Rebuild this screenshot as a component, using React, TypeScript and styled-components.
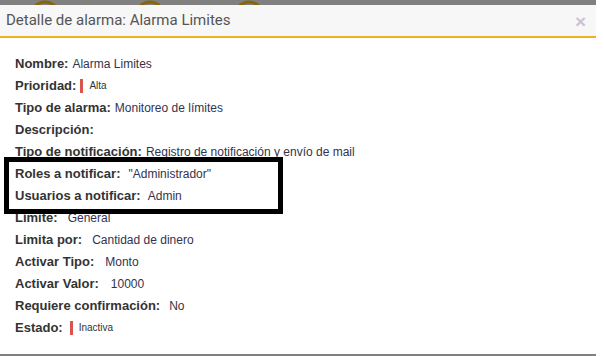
import React from "react";
import styled, { createGlobalStyle } from "styled-components";

// Alarm detail modal, shown over a dimmed page

const Global = createGlobalStyle`
  html, body { margin: 0; padding: 0; background: #fff; }
  body { font-family: "Liberation Sans", Arial, sans-serif; }
`;

const Page = styled.div`
  position: relative;
  width: 604px;
  height: 356px;
  overflow: hidden;
  display: flex;
  flex-direction: column;
`;

const Backdrop = styled.div<{ h: number }>`
  width: 596px;
  height: ${({ h }) => h}px;
  background: #808080;
  flex-shrink: 0;
  overflow: hidden;
  svg { display: block; }
`;

const Modal = styled.div`
  width: 596px;
  flex: 1;
  background: #fff;
  display: flex;
  flex-direction: column;
`;

const Header = styled.div`
  height: 33px;
  background: #f7f7f7;
  border-bottom: 2px solid #f2b01e;
  display: flex;
  align-items: center;
  justify-content: space-between;
  padding: 0 10px 0 6px;
  box-sizing: border-box;
`;

const Title = styled.div`
  font-family: Roboto, "Liberation Sans", sans-serif;
  font-size: 15px;
  color: #555;
  margin-top: -2px;
`;

const Close = styled.span`
  font-family: "Liberation Sans", Arial, sans-serif;
  font-size: 19px;
  font-weight: bold;
  color: #cbc3d3;
  line-height: 1;
  margin-top: 2px;
`;

const Body = styled.div`
  padding: 15px 15px 0;
  display: flex;
  flex-direction: column;
`;

const Row = styled.div`
  height: 22px;
  line-height: 22px;
  display: flex;
  align-items: baseline;
  color: #333;
`;

const Label = styled.span`
  font-weight: bold;
  font-size: 13px;
  color: #333;
`;

const Value = styled.span<{ gap: number }>`
  font-size: 12px;
  color: #33334d;
  margin-left: ${({ gap }) => gap}px;
`;

const Tag = styled.span<{ gap: number }>`
  display: inline-flex;
  align-items: center;
  align-self: center;
  margin-left: ${({ gap }) => gap}px;
  font-size: 10px;
  line-height: 14px;
  color: #333;
  &::before {
    content: "";
    width: 3px;
    height: 14px;
    background: #d9534f;
    margin-right: 6px;
  }
`;

const Highlight = styled.div`
  position: absolute;
  left: 4px;
  top: 157px;
  width: 279px;
  height: 57px;
  border: 5px solid #000;
  box-sizing: border-box;
`;

const rows: { label: string; value?: string; gap?: number; tag?: boolean }[] = [
  { label: "Nombre:", value: "Alarma Limites", gap: 4 },
  { label: "Prioridad:", value: "Alta", gap: 4, tag: true },
  { label: "Tipo de alarma:", value: "Monitoreo de límites", gap: 4 },
  { label: "Descripción:" },
  { label: "Tipo de notificación:", value: "Registro de notificación y envío de mail", gap: 4 },
  { label: "Roles a notificar:", value: "\"Administrador\"", gap: 8 },
  { label: "Usuarios a notificar:", value: "Admin", gap: 7 },
  { label: "Límite:", value: "General", gap: 10 },
  { label: "Limita por:", value: "Cantidad de dinero", gap: 10 },
  { label: "Activar Tipo:", value: "Monto", gap: 11 },
  { label: "Activar Valor:", value: "10000", gap: 12 },
  { label: "Requiere confirmación:", value: "No", gap: 9 },
  { label: "Estado:", value: "Inactiva", gap: 7, tag: true },
];

export default function App() {
  return (
    <>
      <Global />
      <Page>
        <Backdrop h={5}>
          <svg width="596" height="5" viewBox="0 0 596 5">
            {[45, 150, 249].map((cx) => (
              <circle key={cx} cx={cx} cy={16} r={14} fill="none" stroke="#8a6408" strokeWidth={3} />
            ))}
          </svg>
        </Backdrop>
        <Modal>
          <Header>
            <Title>Detalle de alarma: Alarma Limites</Title>
            <Close>×</Close>
          </Header>
          <Body>
            {rows.map((r) =>
              <Row key={r.label}>
                <Label>{r.label}</Label>
                {r.value && (r.tag
                  ? <Tag gap={r.gap ?? 4}>{r.value}</Tag>
                  : <Value gap={r.gap ?? 4}>{r.value}</Value>)}
              </Row>
            )}
          </Body>
        </Modal>
        <Backdrop h={2} />
        <Highlight />
      </Page>
    </>
  );
}
